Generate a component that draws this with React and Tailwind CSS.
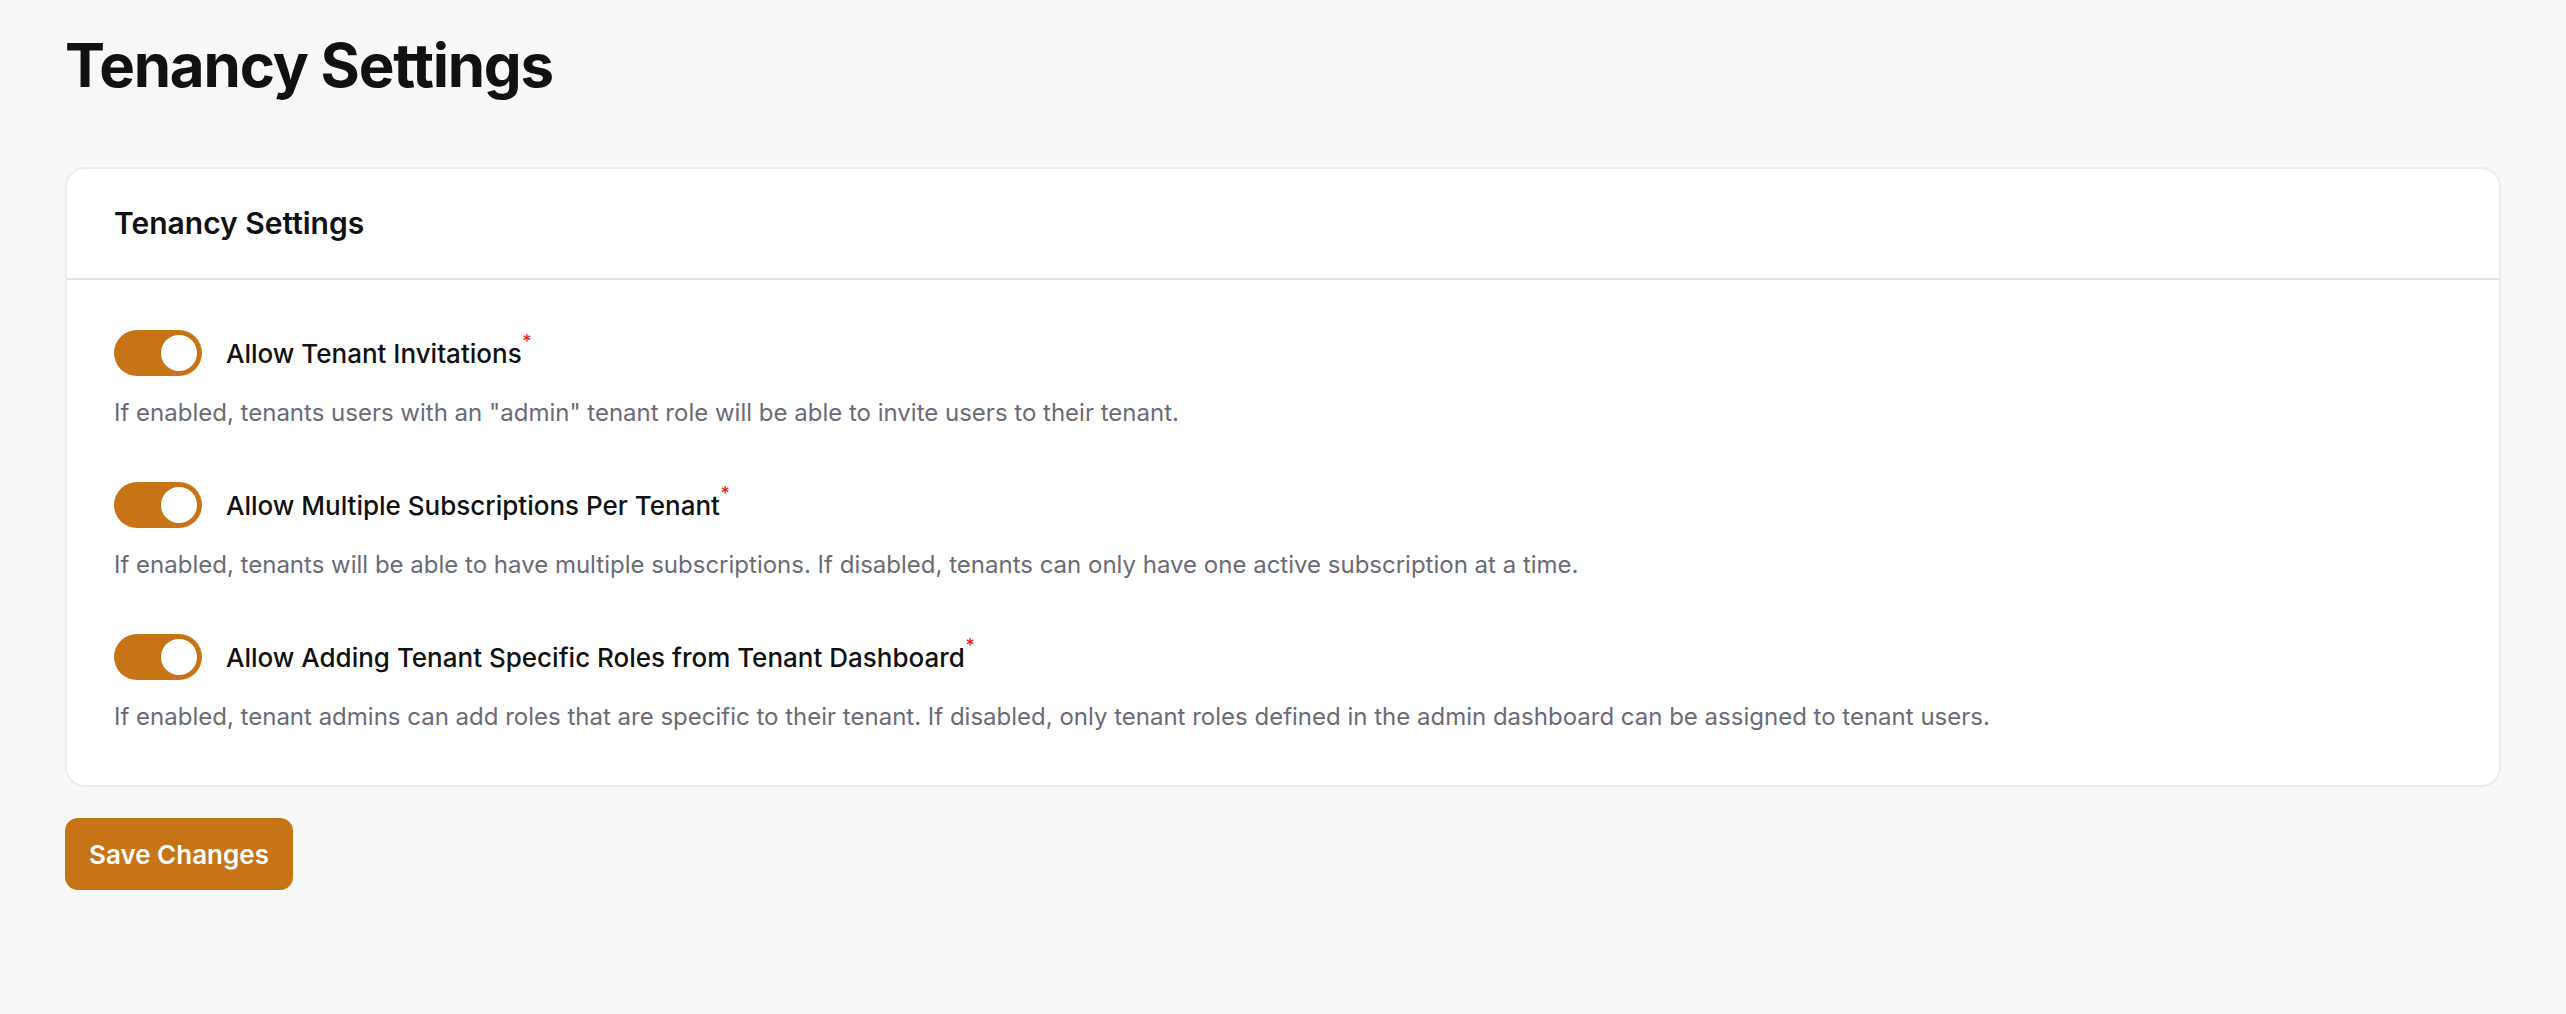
const settings = [
    {
        label: 'Allow Tenant Invitations',
        help: 'If enabled, tenants users with an "admin" tenant role will be able to invite users to their tenant.',
    },
    {
        label: 'Allow Multiple Subscriptions Per Tenant',
        help: 'If enabled, tenants will be able to have multiple subscriptions. If disabled, tenants can only have one active subscription at a time.',
    },
    {
        label: 'Allow Adding Tenant Specific Roles from Tenant Dashboard',
        help: 'If enabled, tenant admins can add roles that are specific to their tenant. If disabled, only tenant roles defined in the admin dashboard can be assigned to tenant users.',
    },
];

export default function App() {
    return (
        <div className="min-h-[1014px] bg-[#f8f8f8] px-[65px] pt-[35px] font-[family-name:Inter,sans-serif]">
            <h1 className="text-[60px] leading-none font-bold text-[#111] tracking-[-0.02em]">Tenancy Settings</h1>

            <div className="mt-[72px] bg-white rounded-[20px] border-2 border-[#ececec]">
                <div className="h-[111px] flex items-center px-[47px] border-b-2 border-[#e3e3e6]">
                    <h2 className="text-[30px] font-semibold text-[#111]">Tenancy Settings</h2>
                </div>
                <div className="px-[47px] pt-[50px] pb-[50px] flex flex-col gap-[51px]">
                    {settings.map((s) => (
                        <div key={s.label}>
                            <div className="flex items-center gap-[24px] h-[46px]">
                                <Toggle />
                                <span className="text-[26px] font-medium text-[#111] relative">
                                    {s.label}
                                    <span className="absolute -right-[10px] -top-[6px] text-[#dc2626] text-[18px]">*</span>
                                </span>
                            </div>
                            <p className="mt-[19px] text-[24px] leading-[36px] text-[#6b6b76]">{s.help}</p>
                        </div>
                    ))}
                </div>
            </div>

            <button className="mt-[31px] h-[72px] px-[24px] rounded-[13px] bg-[#c67415] text-white text-[26px] font-semibold">
                Save Changes
            </button>
        </div>
    );
}

function Toggle() {
    return (
        <div className="w-[88px] h-[46px] rounded-full bg-[#c67415] flex items-center justify-end px-[5px] shrink-0">
            <div className="w-[36px] h-[36px] rounded-full bg-white" />
        </div>
    );
}
